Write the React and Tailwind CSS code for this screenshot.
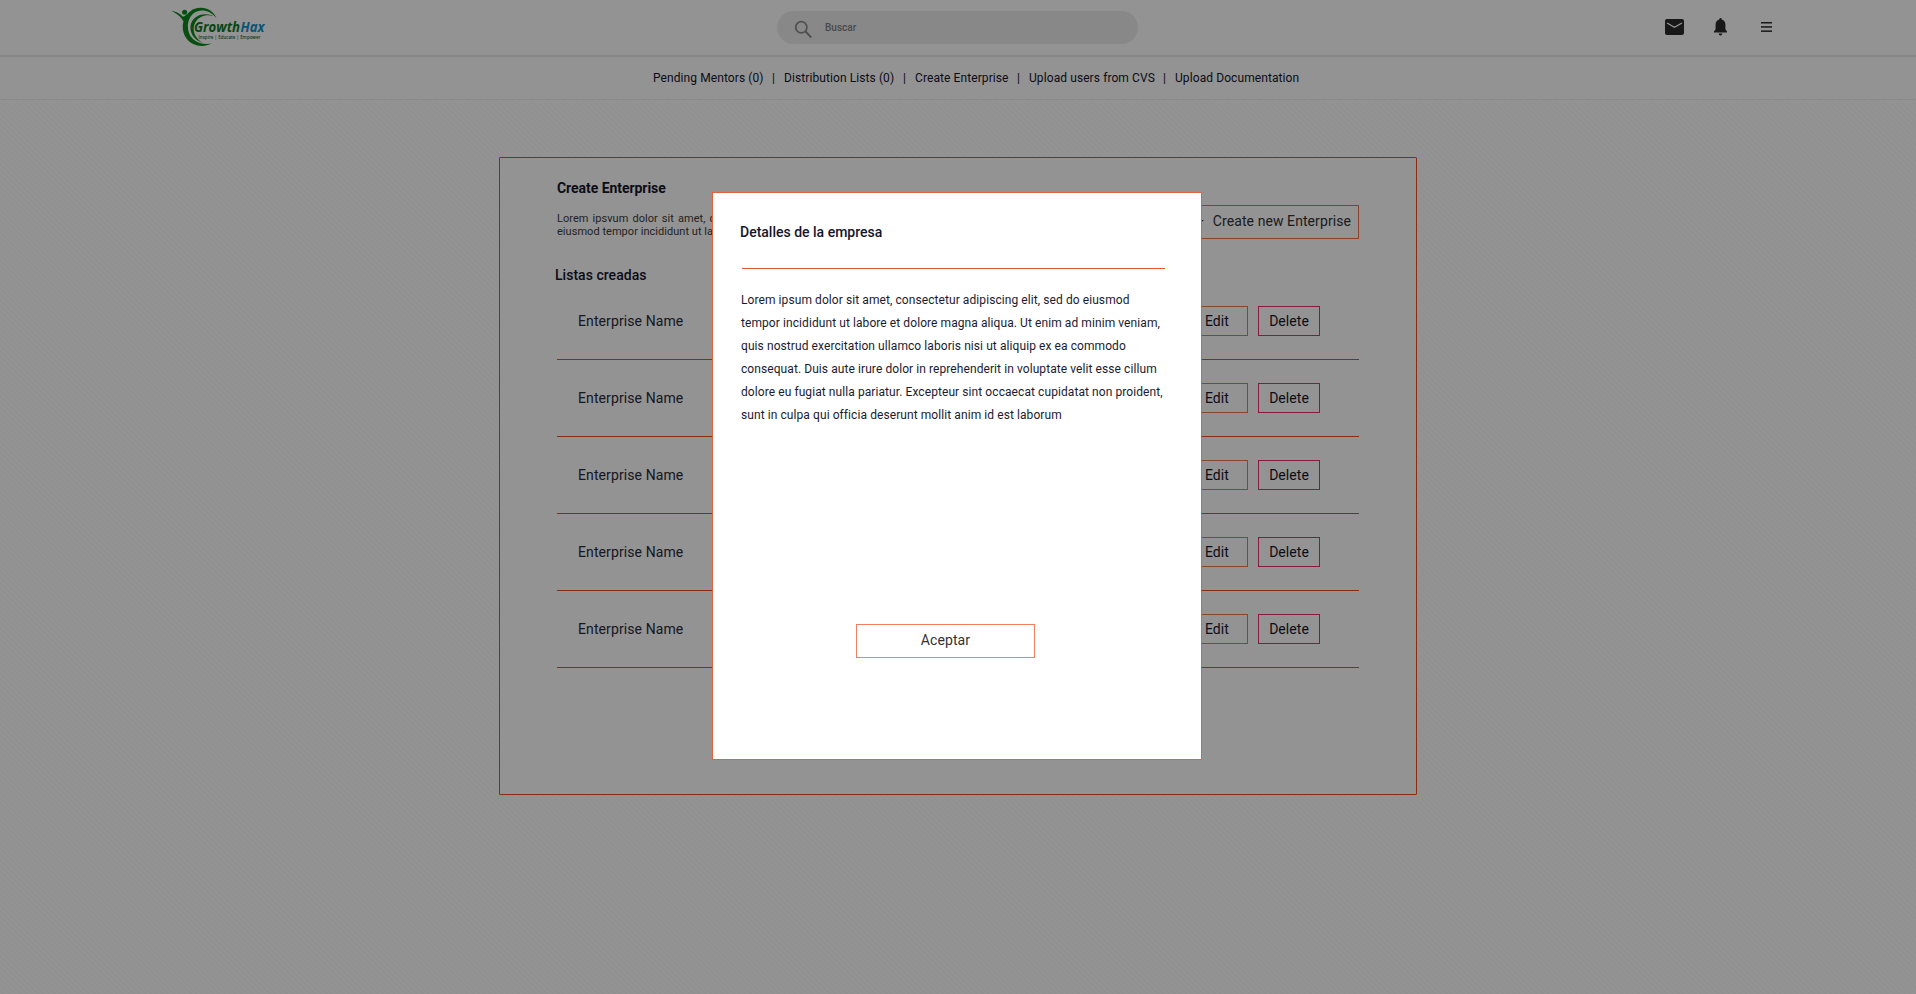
import React from "react";

function Logo() {
  return (
    <svg width="98" height="42" viewBox="0 0 98 42" aria-label="GrowthHax">
      <g fill="#0c8a1c">
        <circle cx="14.600" cy="6.300" r="2.500" />
        <path d="M1 4.600 C6 5.600 10 7.400 13 10.800 C17 9.500 19 5 24 3 C33 -.5 43 3 46.500 12 C40 4 30 2.500 24 7 C18 11.500 16.500 20 19 27 C22 35 31 39.500 41.500 37.500 C33 42 22 40 16.500 32.500 C12.500 27 12 20.500 13.500 15.500 C10.500 10 6 7.500 1 4.600 Z" />
        <path d="M48 12.500 C40 7 30 9 25.500 16 C21.500 23 24 32 33 37 C23 34 18.800 25 21 17.500 C24.500 7.500 38 5 48 12.500 Z" />
      </g>
      <text x="24" y="25.800" fontFamily="'Open Sans', 'Noto Sans', sans-serif" fontStyle="italic" fontWeight="700" fontSize="13.500" fill="#107a1c" textLength="46" lengthAdjust="spacingAndGlyphs">Growth</text>
      <text x="70.500" y="25.800" fontFamily="'Open Sans', 'Noto Sans', sans-serif" fontStyle="italic" fontWeight="700" fontSize="13.500" fill="#1690c8" textLength="24" lengthAdjust="spacingAndGlyphs">Hax</text>
      <text x="28.500" y="32.600" fontFamily="'Open Sans', 'Noto Sans', sans-serif" fontWeight="600" fontSize="4.800" fill="#1c6a30" textLength="62" lengthAdjust="spacingAndGlyphs">Inspire | Educate | Empower</text>
    </svg>
  );
}

const NAV = [
  { label: "Pending Mentors (0)", cls: "w-[110px]" },
  { label: "Distribution Lists (0)", cls: "w-[110px]" },
  { label: "Create Enterprise", cls: "w-[93px]" },
  { label: "Upload users from CVS", cls: "w-[125px]" },
  { label: "Upload Documentation", cls: "w-[125px]" },
];

function Header() {
  return (
    <header className="flex h-[57px] items-start border-b-2 border-[#e9e9e9] bg-white pl-[170px]">
      <div className="mt-[6px] w-[607px]">
        <Logo />
      </div>
      <div className="mt-[11px] flex h-[33px] w-[361px] items-start rounded-full bg-[#ececec]">
        <svg className="ml-[17px] mt-[9px]" width="19" height="19" viewBox="0 0 19 19" fill="none" stroke="#8a8a8a" strokeWidth="1.700">
          <circle cx="7.300" cy="7.300" r="5.600" />
          <path d="M11.300 11.300 L17.400 17.600" strokeWidth="2" />
        </svg>
        <span className="ml-[12px] mt-[9px] text-[10px] font-medium leading-[15px] text-[#808080]">Buscar</span>
      </div>
      <div className="ml-[527px] flex">
        <svg className="mt-[19px]" width="19" height="16" viewBox="0 0 19 16">
          <rect width="19" height="16" rx="2" fill="#2a2a2a" />
          <path d="M2 4 L9.500 8.300 L17 4" fill="none" stroke="#fff" strokeWidth="1.400" />
        </svg>
        <svg className="ml-[30px] mt-[18px]" width="13" height="18" viewBox="0 0 13 18" fill="#2a2a2a">
          <path d="M6.500 0 C7.300 0 7.700 .6 7.700 1.500 C10.300 2.200 11.400 4.200 11.400 6.800 V11.300 L13 13.600 V14.500 H0 V13.600 L1.600 11.300 V6.800 C1.600 4.200 2.700 2.200 5.300 1.500 C5.300 .6 5.700 0 6.500 0 Z" />
          <path d="M4.700 15.500 H8.300 C8.200 16.800 7.600 17.500 6.500 17.500 C5.400 17.500 4.800 16.800 4.700 15.500 Z" />
        </svg>
        <svg className="ml-[34px] mt-[22px]" width="11" height="10" viewBox="0 0 11 10" fill="#2a2a2a">
          <rect width="11" height="1.500" />
          <rect y="4.200" width="11" height="1.500" />
          <rect y="8.400" width="11" height="1.500" />
        </svg>
      </div>
    </header>
  );
}

function Nav() {
  return (
    <nav className="flex h-[43px] items-start border-b border-[#f0f0f0] bg-white pl-[653px] pt-[11px] text-[12px] leading-[20px] tracking-[0.09px] text-[#15152b]">
      {NAV.map((item, i) => (
        <React.Fragment key={item.label}>
          {i > 0 && <span className="w-[21px] text-center">|</span>}
          <a className={"whitespace-nowrap " + item.cls}>{item.label}</a>
        </React.Fragment>
      ))}
    </nav>
  );
}

function EnterpriseRow() {
  return (
    <li className="flex h-[77px] items-start border-b border-[#ec4f22] pt-[23px]">
      <span className="ml-[21px] mt-[5px] w-[608px] text-[14px] leading-[20px] tracking-[0.1px] text-[#2a2a3a]">Enterprise Name</span>
      <button className="flex h-[30px] w-[62px] items-center justify-center border border-[#f07a4c] text-[14px] tracking-[0.1px] text-[#15152b]">Edit</button>
      <button className="ml-[10px] flex h-[30px] w-[62px] items-center justify-center border border-[#e8306a] text-[14px] tracking-[0.05px] text-[#15152b]">Delete</button>
    </li>
  );
}

function EnterpriseCard() {
  return (
    <main className="ml-[499px] mt-[57px] h-[638px] w-[918px] rounded-[1px] border border-[#ec4f22] bg-white pl-[57px] pr-[57px] pt-[20px]">
      <div className="flex h-[92px] justify-between">
        <div className="w-[400px]">
          <h1 className="text-[14px] font-bold leading-[20px] tracking-[-0.05px] text-[#15152b]">Create Enterprise</h1>
          <p className="mt-[14px] text-[11px] leading-[13px] text-[#3c3c3c]">
            <span className="block whitespace-nowrap tracking-[0.04px] [word-spacing:1.300px]">Lorem ipsvum dolor sit amet, consectetur adipiscing elit, sed do</span>
            <span className="block whitespace-nowrap tracking-[0.04px]">eiusmod tempor incididunt ut labore et dolore magna aliqua.</span>
          </p>
        </div>
        <button className="mt-[27px] flex h-[34px] w-[180px] items-center justify-end border border-[#f0704c] pb-px pr-[7px] text-[14px] tracking-[0.08px] text-[#333]">
          <span className="mr-[9px]">+</span>Create new Enterprise
        </button>
      </div>
      <h2 className="-ml-[2px] -mt-[5px] text-[14px] font-medium leading-[20px] tracking-[0.03px] text-[#15152b]">Listas creadas</h2>
      <ul className="-mt-[2px]">
        {[0, 1, 2, 3, 4].map((i) => (
          <EnterpriseRow key={i} />
        ))}
      </ul>
    </main>
  );
}

const DETAILS = [
  "Lorem ipsum dolor sit amet, consectetur adipiscing elit, sed do eiusmod",
  "tempor incididunt ut labore et dolore magna aliqua. Ut enim ad minim veniam,",
  "quis nostrud exercitation ullamco laboris nisi ut aliquip ex ea commodo",
  "consequat. Duis aute irure dolor in reprehenderit in voluptate velit esse cillum",
  "dolore eu fugiat nulla pariatur. Excepteur sint occaecat cupidatat non proident,",
  "sunt in culpa qui officia deserunt mollit anim id est laborum",
];

function DetailsDialog() {
  return (
    <div className="absolute inset-0 bg-black/[0.425]">
      <div role="dialog" className="ml-[712px] mt-[192px] flex h-[568px] w-[490px] flex-col border border-[#e8603a] bg-white pl-[27px] pt-[29px]">
        <h2 className="text-[14px] font-medium leading-[20px] text-[#15152b]">Detalles de la empresa</h2>
        <div className="ml-[2px] mt-[26px] h-px w-[423px] bg-[#e4572e]" />
        <div className="ml-[1px] mt-[20px] text-[12px] leading-[23px] tracking-[0.08px] text-[#1b1b30]">
          {DETAILS.map((line) => (
            <p key={line} className="whitespace-nowrap">{line}</p>
          ))}
        </div>
        <button className="ml-[116px] mt-[197px] flex h-[34px] w-[179px] items-center justify-center border border-[#f27f5e] pb-px text-[14px] tracking-[0.1px] text-[#333]">Aceptar</button>
      </div>
    </div>
  );
}

export default function App() {
  return (
    <div className="relative h-[994px] w-[1916px] overflow-hidden bg-[#fefefe] font-['Roboto',sans-serif]">
      <div className="h-full bg-[repeating-linear-gradient(45deg,#fff_0px,#fff_2px,#fbfbfb_2px,#fbfbfb_4px)]">
        <Header />
        <Nav />
        <EnterpriseCard />
      </div>
      <DetailsDialog />
    </div>
  );
}
